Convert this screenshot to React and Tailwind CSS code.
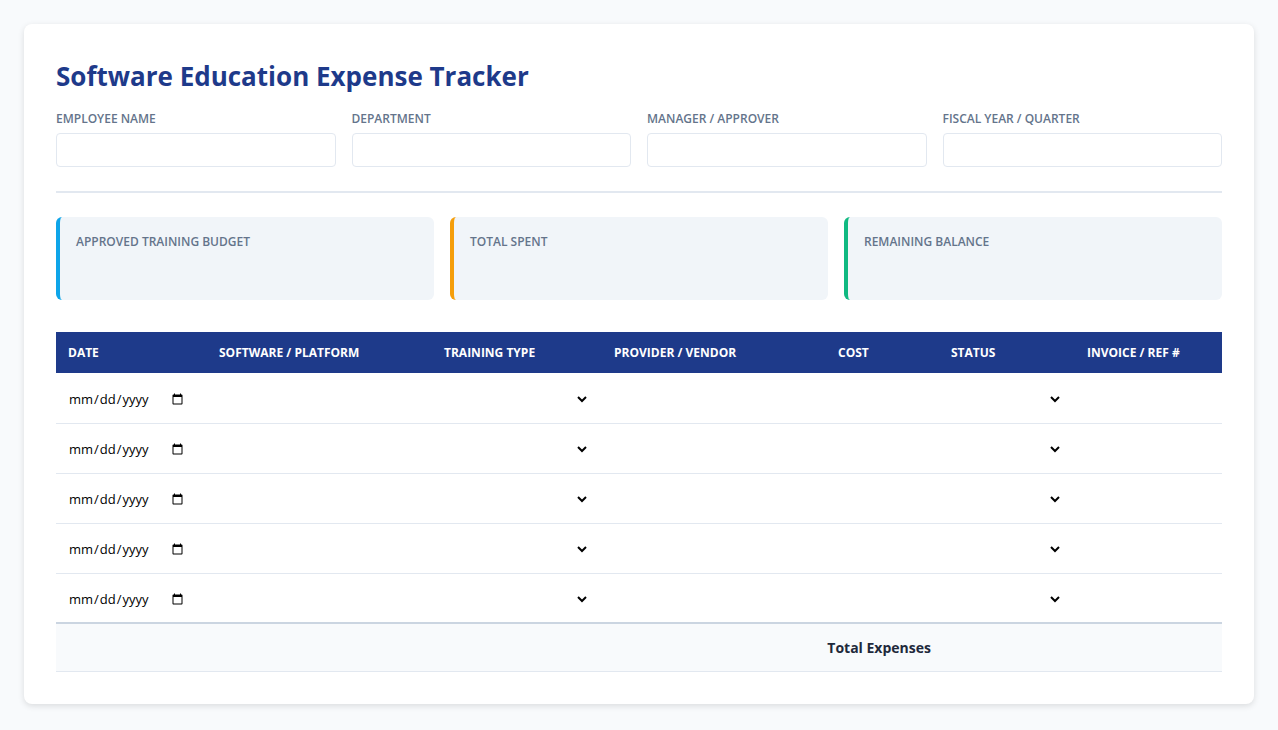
export default function App() {
  const cols = [
    ["DATE", 151], ["SOFTWARE / PLATFORM", 225], ["TRAINING TYPE", 170], ["PROVIDER / VENDOR", 224],
    ["COST", 113], ["STATUS", 136], ["INVOICE / REF #", 147],
  ];
  const fields = ["EMPLOYEE NAME", "DEPARTMENT", "MANAGER / APPROVER", "FISCAL YEAR / QUARTER"];
  const stats = [["APPROVED TRAINING BUDGET", "border-[#0ea5e9]"], ["TOTAL SPENT", "border-[#f59e0b]"], ["REMAINING BALANCE", "border-[#10b981]"]];
  return (
    <div className="min-h-[730px] bg-[#f8fafc] p-6" style={{ fontFamily: '"Open Sans", "Noto Sans", sans-serif' }}>
      <div className="bg-white rounded-lg shadow-[0_2px_6px_rgba(0,0,0,0.12)] px-8 pt-[34px] pb-8">
        <h1 className="text-[26px] font-bold text-[#1e3a8a] leading-9">Software Education Expense Tracker</h1>
        <div className="grid grid-cols-4 gap-4 mt-[17px]">
          {fields.map(f => (
            <div key={f}>
              <div className="text-[12px] font-semibold text-[#64748b] leading-4">{f}</div>
              <input className="mt-[6px] w-full h-[34px] border border-[#e2e8f0] rounded" />
            </div>
          ))}
        </div>
        <div className="mt-6 border-t-2 border-[#e2e8f0]" />
        <div className="grid grid-cols-3 gap-4 mt-6">
          {stats.map(([t, b]) => (
            <div key={t} className={`h-[83px] bg-[#f1f5f9] rounded-md border-l-4 ${b} px-4 pt-4`}>
              <div className="text-[12px] font-semibold text-[#64748b]">{t}</div>
            </div>
          ))}
        </div>
        <table className="mt-8 w-full border-collapse table-fixed">
          <colgroup>{cols.map(([c, w]) => <col key={c} style={{ width: w }} />)}</colgroup>
          <thead>
            <tr className="bg-[#1e3a8a] h-[41px]">
              {cols.map(([c]) => <th key={c} className="text-left text-white text-[12px] font-bold px-3">{c}</th>)}
            </tr>
          </thead>
          <tbody>
            {[0, 1, 2, 3, 4].map(i => (
              <tr key={i} className="h-[50px] border-b border-[#e2e8f0] last:border-b-0">
                <td className="px-3"><input type="date" className="text-[13px] outline-none bg-transparent" /></td>
                <td></td>
                <td className="px-3"><select className="w-full bg-transparent outline-none text-[13px]"><option></option></select></td>
                <td></td>
                <td></td>
                <td className="px-3"><select className="w-full bg-transparent outline-none text-[13px]"><option></option></select></td>
                <td></td>
              </tr>
            ))}
          </tbody>
          <tfoot>
            <tr className="h-[48px] bg-[#f8fafc] border-t-2 border-[#cbd5e1] border-b border-b-[#e2e8f0]">
              <td colSpan={5} className="text-right pr-[8px] text-[14px] font-bold text-[#1e293b]">Total Expenses</td>
              <td colSpan={2}></td>
            </tr>
          </tfoot>
        </table>
      </div>
    </div>
  );
}
